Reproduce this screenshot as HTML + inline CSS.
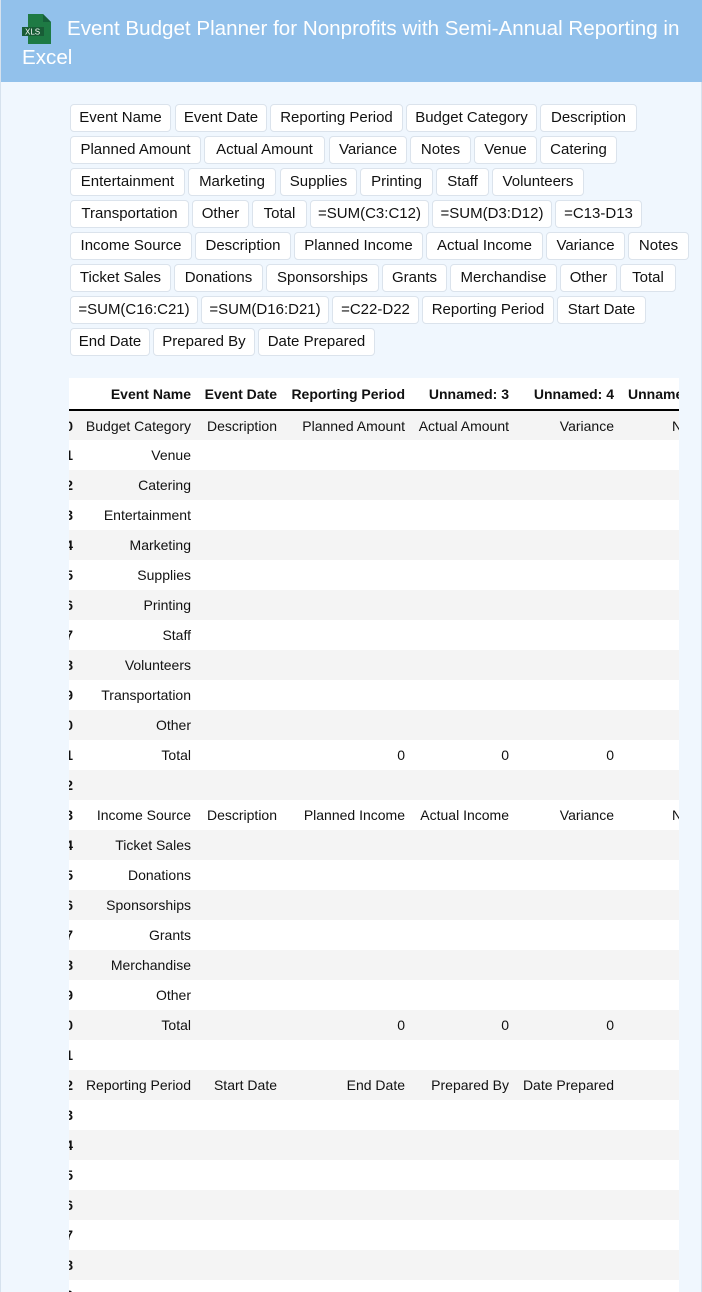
<!DOCTYPE html>
<html><head><meta charset="utf-8"><style>
*{box-sizing:border-box;margin:0;padding:0}
html,body{width:702px;height:1292px;overflow:hidden}
body{background:#f0f7fe;font-family:"Liberation Sans",sans-serif;position:relative;border-left:1px solid #d6e2ee;border-right:1px solid #d6e2ee}
.hdr{position:absolute;left:0;top:0;width:702px;height:82px;background:#92c1eb;color:#fff;font-size:20.6px;line-height:29px}
.hdr .t1{position:absolute;left:66px;top:14px;white-space:nowrap}
.hdr .t2{position:absolute;left:21px;top:43px}
.ico{position:absolute;left:21px;top:14px}
.b{position:absolute;height:28px;background:#fff;border:1px solid #dbe3ec;border-radius:4px;font-size:15px;line-height:26px;text-align:center;color:#111;white-space:nowrap}
.tw{position:absolute;left:68px;top:378px;width:610px;height:914px;overflow:hidden;background:#fff}
table{position:absolute;left:-30px;top:0;width:681px;border-collapse:collapse;table-layout:fixed;font-size:14px;color:#111}
td,th{height:30px;padding:0 6px;text-align:right;white-space:nowrap;overflow:hidden}
thead th{height:32px;border-bottom:2px solid #000;font-weight:bold}
tbody th{font-weight:bold}
tbody tr:nth-child(odd){background:#f4f4f4}
</style></head><body>
<div class="hdr">
<svg class="ico" width="30" height="30" viewBox="0 0 30 30"><path d="M6 0h15l8 8v22H6z" fill="#1e7a44"/><path d="M21 0v8h8z" fill="#16603a"/><rect x="0" y="13" width="22" height="9" fill="#185c36"/><text x="3" y="20.5" font-size="8" fill="#fff" font-family="Liberation Sans">XLS</text></svg>
<span class="t1">Event Budget Planner for Nonprofits with Semi-Annual Reporting in</span>
<span class="t2">Excel</span>
</div>
<div class="btns">
<div class="b" style="left:69px;top:104px;width:101px">Event Name</div>
<div class="b" style="left:174px;top:104px;width:92px">Event Date</div>
<div class="b" style="left:269px;top:104px;width:133px">Reporting Period</div>
<div class="b" style="left:405px;top:104px;width:131px">Budget Category</div>
<div class="b" style="left:539px;top:104px;width:97px">Description</div>
<div class="b" style="left:69px;top:136px;width:131px">Planned Amount</div>
<div class="b" style="left:203px;top:136px;width:121px">Actual Amount</div>
<div class="b" style="left:328px;top:136px;width:78px">Variance</div>
<div class="b" style="left:409px;top:136px;width:61px">Notes</div>
<div class="b" style="left:473px;top:136px;width:63px">Venue</div>
<div class="b" style="left:539px;top:136px;width:77px">Catering</div>
<div class="b" style="left:69px;top:168px;width:115px">Entertainment</div>
<div class="b" style="left:187px;top:168px;width:88px">Marketing</div>
<div class="b" style="left:279px;top:168px;width:77px">Supplies</div>
<div class="b" style="left:359px;top:168px;width:73px">Printing</div>
<div class="b" style="left:435px;top:168px;width:53px">Staff</div>
<div class="b" style="left:491px;top:168px;width:92px">Volunteers</div>
<div class="b" style="left:69px;top:200px;width:119px">Transportation</div>
<div class="b" style="left:191px;top:200px;width:57px">Other</div>
<div class="b" style="left:251px;top:200px;width:55px">Total</div>
<div class="b" style="left:309px;top:200px;width:119px">=SUM(C3:C12)</div>
<div class="b" style="left:431px;top:200px;width:120px">=SUM(D3:D12)</div>
<div class="b" style="left:554px;top:200px;width:87px">=C13-D13</div>
<div class="b" style="left:69px;top:232px;width:122px">Income Source</div>
<div class="b" style="left:194px;top:232px;width:96px">Description</div>
<div class="b" style="left:293px;top:232px;width:129px">Planned Income</div>
<div class="b" style="left:425px;top:232px;width:117px">Actual Income</div>
<div class="b" style="left:545px;top:232px;width:79px">Variance</div>
<div class="b" style="left:627px;top:232px;width:61px">Notes</div>
<div class="b" style="left:69px;top:264px;width:101px">Ticket Sales</div>
<div class="b" style="left:173px;top:264px;width:89px">Donations</div>
<div class="b" style="left:265px;top:264px;width:113px">Sponsorships</div>
<div class="b" style="left:381px;top:264px;width:65px">Grants</div>
<div class="b" style="left:449px;top:264px;width:107px">Merchandise</div>
<div class="b" style="left:559px;top:264px;width:57px">Other</div>
<div class="b" style="left:619px;top:264px;width:56px">Total</div>
<div class="b" style="left:69px;top:296px;width:128px">=SUM(C16:C21)</div>
<div class="b" style="left:200px;top:296px;width:128px">=SUM(D16:D21)</div>
<div class="b" style="left:331px;top:296px;width:87px">=C22-D22</div>
<div class="b" style="left:421px;top:296px;width:132px">Reporting Period</div>
<div class="b" style="left:556px;top:296px;width:89px">Start Date</div>
<div class="b" style="left:69px;top:328px;width:80px">End Date</div>
<div class="b" style="left:152px;top:328px;width:102px">Prepared By</div>
<div class="b" style="left:257px;top:328px;width:117px">Date Prepared</div>
</div>
<div class="tw">
<table>
<colgroup><col style="width:40px"><col style="width:118px"><col style="width:86px"><col style="width:128px"><col style="width:104px"><col style="width:105px"><col style="width:100px"></colgroup>
<thead><tr><th></th><th>Event Name</th><th>Event Date</th><th>Reporting Period</th><th>Unnamed: 3</th><th>Unnamed: 4</th><th style="text-align:left;padding-left:8px">Unnamed: 5</th></tr></thead>
<tbody>
<tr><th>0</th><td>Budget Category</td><td>Description</td><td>Planned Amount</td><td>Actual Amount</td><td>Variance</td><td style="text-align:left;padding-left:52px">Notes</td></tr>
<tr><th>1</th><td>Venue</td><td></td><td></td><td></td><td></td><td></td></tr>
<tr><th>2</th><td>Catering</td><td></td><td></td><td></td><td></td><td></td></tr>
<tr><th>3</th><td>Entertainment</td><td></td><td></td><td></td><td></td><td></td></tr>
<tr><th>4</th><td>Marketing</td><td></td><td></td><td></td><td></td><td></td></tr>
<tr><th>5</th><td>Supplies</td><td></td><td></td><td></td><td></td><td></td></tr>
<tr><th>6</th><td>Printing</td><td></td><td></td><td></td><td></td><td></td></tr>
<tr><th>7</th><td>Staff</td><td></td><td></td><td></td><td></td><td></td></tr>
<tr><th>8</th><td>Volunteers</td><td></td><td></td><td></td><td></td><td></td></tr>
<tr><th>9</th><td>Transportation</td><td></td><td></td><td></td><td></td><td></td></tr>
<tr><th>10</th><td>Other</td><td></td><td></td><td></td><td></td><td></td></tr>
<tr><th>11</th><td>Total</td><td></td><td>0</td><td>0</td><td>0</td><td></td></tr>
<tr><th>12</th><td></td><td></td><td></td><td></td><td></td><td></td></tr>
<tr><th>13</th><td>Income Source</td><td>Description</td><td>Planned Income</td><td>Actual Income</td><td>Variance</td><td style="text-align:left;padding-left:52px">Notes</td></tr>
<tr><th>14</th><td>Ticket Sales</td><td></td><td></td><td></td><td></td><td></td></tr>
<tr><th>15</th><td>Donations</td><td></td><td></td><td></td><td></td><td></td></tr>
<tr><th>16</th><td>Sponsorships</td><td></td><td></td><td></td><td></td><td></td></tr>
<tr><th>17</th><td>Grants</td><td></td><td></td><td></td><td></td><td></td></tr>
<tr><th>18</th><td>Merchandise</td><td></td><td></td><td></td><td></td><td></td></tr>
<tr><th>19</th><td>Other</td><td></td><td></td><td></td><td></td><td></td></tr>
<tr><th>20</th><td>Total</td><td></td><td>0</td><td>0</td><td>0</td><td></td></tr>
<tr><th>21</th><td></td><td></td><td></td><td></td><td></td><td></td></tr>
<tr><th>22</th><td>Reporting Period</td><td>Start Date</td><td>End Date</td><td>Prepared By</td><td>Date Prepared</td><td></td></tr>
<tr><th>23</th><td></td><td></td><td></td><td></td><td></td><td></td></tr>
<tr><th>24</th><td></td><td></td><td></td><td></td><td></td><td></td></tr>
<tr><th>25</th><td></td><td></td><td></td><td></td><td></td><td></td></tr>
<tr><th>26</th><td></td><td></td><td></td><td></td><td></td><td></td></tr>
<tr><th>27</th><td></td><td></td><td></td><td></td><td></td><td></td></tr>
<tr><th>28</th><td></td><td></td><td></td><td></td><td></td><td></td></tr>
<tr><th>29</th><td></td><td></td><td></td><td></td><td></td><td></td></tr>
<tr><th>30</th><td></td><td></td><td></td><td></td><td></td><td></td></tr>
</tbody></table>
</div>
</body></html>
